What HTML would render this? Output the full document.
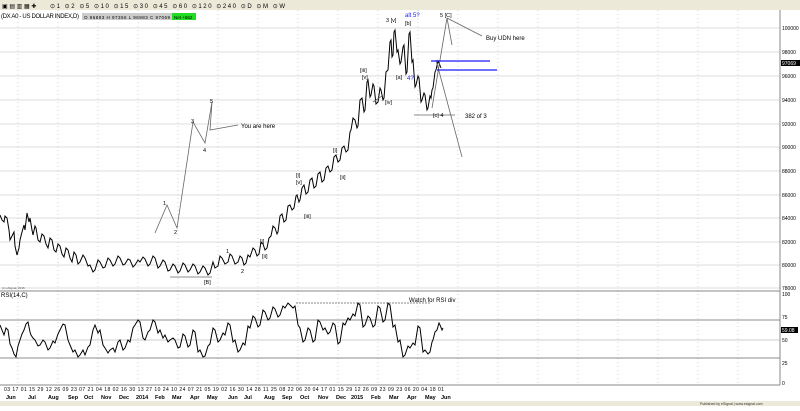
<!DOCTYPE html><html><head><style>
body{margin:0;width:800px;height:406px;overflow:hidden;background:#fff;font-family:"Liberation Sans",sans-serif}
svg text{font-family:"Liberation Sans",sans-serif}
</style></head><body>
<svg width="800" height="406" viewBox="0 0 800 406" xmlns="http://www.w3.org/2000/svg">
<rect x="0" y="0" width="800" height="10" fill="#ece9d8"/>
<g font-size="6" fill="#000">
<text x="2" y="8">▣ ▤ ▥ ▦ ✚</text>
<text x="50" y="8" textLength="235">⊙1 ⊙2 ⊙5 ⊙10 ⊙15 ⊙30 ⊙45 ⊙60 ⊙120 ⊙240 ⊙D ⊙M ⊙W</text>
</g>
<g stroke="#ddd" stroke-width="1">
<line x1="0" y1="28" x2="780" y2="28"/><line x1="0" y1="52" x2="780" y2="52"/><line x1="0" y1="76" x2="780" y2="76"/><line x1="0" y1="100" x2="780" y2="100"/><line x1="0" y1="124" x2="780" y2="124"/><line x1="0" y1="147" x2="780" y2="147"/><line x1="0" y1="171" x2="780" y2="171"/><line x1="0" y1="195" x2="780" y2="195"/><line x1="0" y1="218" x2="780" y2="218"/><line x1="0" y1="242" x2="780" y2="242"/><line x1="0" y1="265" x2="780" y2="265"/><line x1="0" y1="288" x2="780" y2="288"/>
</g>
<g stroke="#ccc" stroke-dasharray="1,3">
<line x1="18" y1="10" x2="18" y2="385"/><line x1="58" y1="10" x2="58" y2="385"/><line x1="98" y1="10" x2="98" y2="385"/><line x1="138" y1="10" x2="138" y2="385"/><line x1="178" y1="10" x2="178" y2="385"/><line x1="218" y1="10" x2="218" y2="385"/><line x1="258" y1="10" x2="258" y2="385"/><line x1="298" y1="10" x2="298" y2="385"/><line x1="338" y1="10" x2="338" y2="385"/><line x1="378" y1="10" x2="378" y2="385"/><line x1="418" y1="10" x2="418" y2="385"/><line x1="458" y1="10" x2="458" y2="385"/><line x1="498" y1="10" x2="498" y2="385"/><line x1="538" y1="10" x2="538" y2="385"/><line x1="578" y1="10" x2="578" y2="385"/><line x1="618" y1="10" x2="618" y2="385"/><line x1="658" y1="10" x2="658" y2="385"/><line x1="698" y1="10" x2="698" y2="385"/><line x1="738" y1="10" x2="738" y2="385"/>
</g>
<text x="1" y="18" font-size="6" textLength="78">(DX A0 - US DOLLAR INDEX,D)</text>
<rect x="82" y="13" width="114" height="7" fill="#ccc"/>
<text x="84" y="19" font-size="4.5" textLength="86">O 96893  H 97356  L 96983  C 97069</text>
<rect x="172" y="13" width="24" height="7" fill="#22dd22"/>
<text x="174" y="19" font-size="4.5">Net +562</text>
<polyline fill="none" stroke="#000" stroke-width="1" points="0,215 2,220 4,222 5,216 7,218 9,230 10,240 12,236 14,232 15,246 17,255 19,248 20,240 22,232 24,225 25,230 27,213 29,222 30,218 32,230 33,235 35,226 36,228 38,240 40,242 42,234 44,236 46,244 48,248 50,238 52,240 54,250 56,252 58,244 60,246 62,254 64,257 66,248 68,250 70,258 72,262 74,252 76,255 78,264 80,262 83,255 85,258 88,266 90,265 93,272 95,270 98,260 100,262 103,268 105,267 108,258 110,260 113,266 115,264 118,256 120,258 123,265 125,264 128,259 130,260 133,267 135,265 138,260 140,262 143,257 145,259 148,266 150,264 153,256 155,258 158,268 160,266 163,260 165,262 168,271 170,270 173,264 175,266 178,273 180,271 183,263 185,265 188,272 190,270 193,264 195,266 198,274 200,272 203,266 205,268 208,275 210,273 213,262 215,268 218,266 220,256 222,258 225,264 228,262 230,254 232,256 235,264 238,262 240,256 242,258 244,265 246,263 248,255 250,257 253,248 255,250 257,256 259,254 261,242 263,244 265,250 267,248 269,238 271,236 273,226 275,228 277,234 278,232 280,216 282,214 284,222 286,220 288,206 290,205 292,210 294,208 296,196 297,195 299,202 300,200 302,188 304,185 306,194 308,192 310,180 312,178 314,188 316,186 318,174 320,172 322,182 324,180 326,168 328,166 330,172 332,170 334,157 336,155 338,162 340,160 342,148 344,146 346,152 348,150 350,132 351,130 353,118 355,120 357,128 358,126 360,100 362,98 364,112 365,110 367,82 368,80 370,97 371,95 373,84 374,86 376,104 378,102 380,88 381,90 383,100 384,98 386,72 388,70 390,42 391,40 392,57 393,55 394,32 395,30 397,52 398,50 400,64 401,62 403,47 404,45 406,74 407,72 409,34 410,32 412,62 413,60 415,87 416,85 418,76 419,78 421,102 422,100 424,93 425,95 427,110 428,108 430,96 431,98 432,90 433,88 435,72 436,70 438,61 439,63 441,68"/>
<g fill="none" stroke="#666" stroke-width="0.8">
<polyline points="155,233 167,205 177,228 193,122 205,143 212,102 210,130 238,125"/>
<polyline points="432,108 447,18 452,45"/>
<line x1="447" y1="18" x2="482" y2="36"/>
<line x1="436" y1="60" x2="462" y2="157"/>
<line x1="414" y1="115" x2="455" y2="115"/>
<line x1="170" y1="277" x2="212" y2="277"/>
<line x1="296" y1="303" x2="430" y2="303" stroke-dasharray="2,1"/>
<line x1="373" y1="102" x2="382" y2="96"/>
</g>
<line x1="431" y1="61" x2="490" y2="61" stroke="#1a1aff" stroke-width="1.2"/>
<line x1="437" y1="70" x2="497" y2="70" stroke="#1a1aff" stroke-width="1.2"/>
<g font-size="5.5" fill="#000">
<text x="163" y="205">1</text><text x="174" y="234">2</text><text x="191" y="123">3</text><text x="203" y="152">4</text><text x="210" y="103">5</text>
<text x="241" y="128" font-size="6">You are here</text>
<text x="486" y="40" font-size="6">Buy  UDN here</text>
<text x="465" y="118" font-size="6">382 of 3</text>
<text x="409" y="302" font-size="6">Watch for RSI div</text>
<text x="386" y="22">3 [v]</text><text x="405" y="25">[b]</text><text x="440" y="17">5 [C]</text>
<text x="433" y="117">[c] 4</text><text x="396" y="79">[a]</text>
<text x="360" y="72">[iii]</text><text x="362" y="79">[v]</text><text x="385" y="104">[iv]</text>
<text x="296" y="177">[i]</text><text x="296" y="184">[v]</text><text x="304" y="218">[iii]</text>
<text x="260" y="243">[i]</text><text x="262" y="258">[ii]</text><text x="226" y="253">1</text><text x="241" y="273">2</text>
<text x="204" y="284">[B]</text>
<text x="340" y="179">[ii]</text><text x="333" y="152">[i]</text>
</g>
<text x="405" y="17" font-size="6" fill="#1a1aff">alt 5?</text>
<text x="407" y="80" font-size="6" fill="#1a1aff">4?</text>
<text x="2" y="289" font-size="3" fill="#555">(c) eSignal, 2015</text>
<line x1="0" y1="291" x2="780" y2="291" stroke="#888"/>
<text x="1" y="297" font-size="6">RSI(14,C)</text>
<line x1="0" y1="320" x2="780" y2="320" stroke="#666" stroke-width="0.8"/>
<line x1="0" y1="358" x2="780" y2="358" stroke="#666" stroke-width="0.8"/>
<line x1="0" y1="340" x2="780" y2="340" stroke="#ccc"/>
<polyline fill="none" stroke="#000" stroke-width="1" points="0,325 2,330 4,335 6,328 8,330 10,344 12,348 14,354 16,357 18,346 20,340 22,334 24,330 26,324 28,322 30,332 31,335 33,338 35,340 38,346 40,345 43,340 45,342 48,350 50,348 53,341 55,343 58,334 60,330 63,324 65,325 68,340 70,345 73,352 75,350 78,357 80,355 83,350 85,355 88,347 90,345 93,330 95,325 98,333 100,330 103,345 105,348 108,353 110,350 113,348 115,352 118,342 120,340 123,350 125,348 128,340 130,342 133,328 135,325 138,320 140,322 143,338 145,340 148,332 150,330 153,320 155,322 158,333 160,330 163,338 165,335 168,342 170,340 173,338 175,340 178,348 180,347 183,334 185,336 188,347 190,345 193,330 195,332 198,352 200,350 203,357 205,356 208,346 210,344 213,328 215,330 218,342 220,340 223,333 225,335 228,323 230,325 233,342 235,340 238,352 240,350 243,343 245,345 248,326 250,328 253,316 255,318 258,327 260,325 263,310 265,312 268,320 270,318 273,307 275,309 278,317 280,315 283,306 285,308 288,303 290,305 293,308 295,306 298,325 300,328 303,342 305,340 308,328 310,330 313,342 315,340 318,320 320,322 323,330 325,328 328,334 330,332 333,323 335,325 338,344 340,342 343,323 345,325 348,318 350,320 353,314 355,316 358,303 360,305 363,327 365,325 368,316 370,318 373,327 375,325 378,306 380,308 383,322 385,320 388,303 390,305 393,327 395,325 398,342 400,340 403,357 405,355 408,346 410,348 413,343 415,345 418,326 420,328 423,352 425,350 428,354 430,352 432,342 433,340 435,332 437,330 439,323 440,325 442,330 443,328"/>
<line x1="780" y1="10" x2="780" y2="385" stroke="#888"/>
<g font-size="5" fill="#000">
<text x="782" y="30">100000</text><text x="782" y="54">98000</text><text x="782" y="78">96000</text><text x="782" y="102">94000</text><text x="782" y="126">92000</text><text x="782" y="149">90000</text><text x="782" y="173">88000</text><text x="782" y="197">86000</text><text x="782" y="220">84000</text><text x="782" y="244">82000</text><text x="782" y="267">80000</text><text x="782" y="290">78000</text>
<text x="782" y="296">100</text><text x="782" y="319">75</text><text x="782" y="342">50</text><text x="782" y="365">25</text><text x="782" y="385">0</text>
</g>
<rect x="781" y="60" width="19" height="6" fill="#000"/><text x="782" y="65" font-size="5" fill="#fff">97069</text>
<rect x="781" y="327" width="17" height="6" fill="#000"/><text x="782" y="332" font-size="5" fill="#fff">59.08</text>
<line x1="0" y1="385" x2="780" y2="385" stroke="#888"/>
<text x="4" y="391" font-size="5" textLength="440" xml:space="preserve">03 17 01 15 29 12 26 09 23 07 21 04 18 02 16 30 13 27 10 24 10 24 07 21 05 19 02 16 30 14 28 11 25 08 22 06 20 04 17 01 15 29 12 26 09 23 09 23 06 20 04 18 01</text>
<g font-size="5.5" font-weight="bold">
<text x="6" y="399">Jun</text><text x="28" y="399">Jul</text><text x="48" y="399">Aug</text><text x="68" y="399">Sep</text><text x="84" y="399">Oct</text><text x="101" y="399">Nov</text><text x="119" y="399">Dec</text><text x="136" y="399">2014</text><text x="155" y="399">Feb</text><text x="172" y="399">Mar</text><text x="190" y="399">Apr</text><text x="207" y="399">May</text><text x="228" y="399">Jun</text><text x="244" y="399">Jul</text><text x="264" y="399">Aug</text><text x="282" y="399">Sep</text><text x="300" y="399">Oct</text><text x="318" y="399">Nov</text><text x="336" y="399">Dec</text><text x="351" y="399">2015</text><text x="371" y="399">Feb</text><text x="389" y="399">Mar</text><text x="407" y="399">Apr</text><text x="425" y="399">May</text><text x="441" y="399">Jun</text>
</g>
<rect x="0" y="401" width="800" height="5" fill="#ece9d8"/>
<text x="700" y="405" font-size="3.5" fill="#333">Published by eSignal | www.esignal.com</text>
</svg>
</body></html>
